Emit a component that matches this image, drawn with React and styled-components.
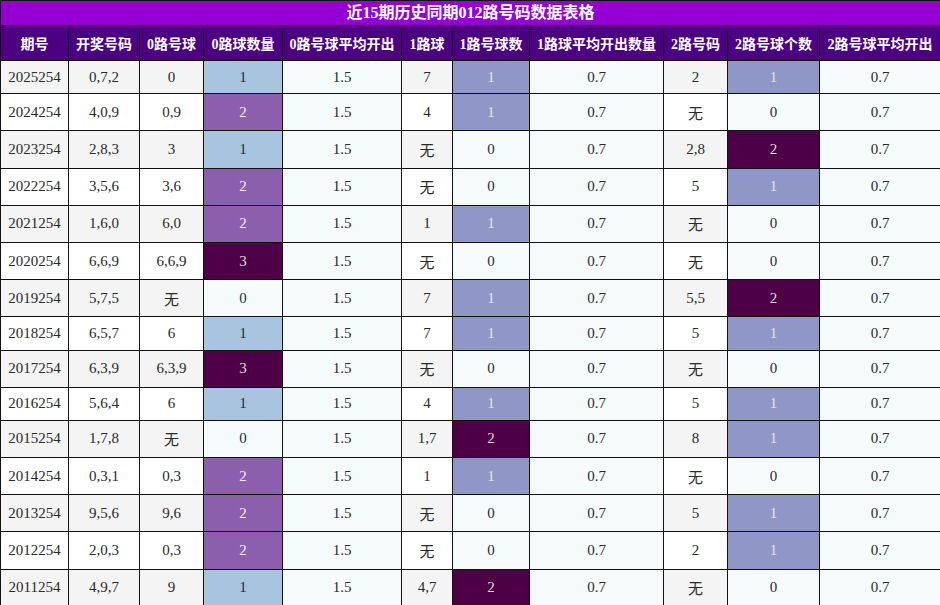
import React from 'react';
import styled, { createGlobalStyle } from 'styled-components';

const GlobalStyle = createGlobalStyle`
  body {
    margin: 0;
    background: #fff;
    font-family: "Liberation Serif", "Noto Sans CJK SC", serif;
  }
`;

const StyledTable = styled.table`
  width: 940px;
  border-collapse: collapse;
  table-layout: fixed;
  text-align: center;
  font-size: 15px;
  color: #2a2a2a;

  td,
  th {
    border: 1px solid #111;
  }
`;

const TitleCell = styled.th`
  height: 24px;
  padding: 0;
  line-height: 24px;
  background: #9400d3;
  color: #fff;
  font-size: 16px;
  font-weight: 700;
`;

const HeadCell = styled.th`
  padding: 7px 0;
  background: #4b0082;
  color: #fff;
  font-size: 14px;
  font-weight: 700;
  white-space: nowrap;
`;

const Cell = styled.td`
  padding: 7.6px 0;
  white-space: nowrap;
  background: ${({ $bg }) => $bg || '#fff'};
  color: ${({ $fg }) => $fg || '#2a2a2a'};
`;

const widths = [68, 71, 64, 79, 119, 51, 77, 134, 64, 92, 121];

const headers = [
  '期号',
  '开奖号码',
  '0路号球',
  '0路球数量',
  '0路号球平均开出',
  '1路球',
  '1路号球数',
  '1路球平均开出数量',
  '2路号码',
  '2路号球个数',
  '2路号球平均开出',
];

const rows = [
  ['2025254', '0,7,2', '0', 1, '7', 1, '2', 1],
  ['2024254', '4,0,9', '0,9', 2, '4', 1, '无', 0],
  ['2023254', '2,8,3', '3', 1, '无', 0, '2,8', 2],
  ['2022254', '3,5,6', '3,6', 2, '无', 0, '5', 1],
  ['2021254', '1,6,0', '6,0', 2, '1', 1, '无', 0],
  ['2020254', '6,6,9', '6,6,9', 3, '无', 0, '无', 0],
  ['2019254', '5,7,5', '无', 0, '7', 1, '5,5', 2],
  ['2018254', '6,5,7', '6', 1, '7', 1, '5', 1],
  ['2017254', '6,3,9', '6,3,9', 3, '无', 0, '无', 0],
  ['2016254', '5,6,4', '6', 1, '4', 1, '5', 1],
  ['2015254', '1,7,8', '无', 0, '1,7', 2, '8', 1],
  ['2014254', '0,3,1', '0,3', 2, '1', 1, '无', 0],
  ['2013254', '9,5,6', '9,6', 2, '无', 0, '5', 1],
  ['2012254', '2,0,3', '0,3', 2, '无', 0, '2', 1],
  ['2011254', '4,9,7', '9', 1, '4,7', 2, '无', 0],
];

const AVG_BG = '#f5fbfb';

// count colours: 0路 column uses its own scale, 1路 / 2路 share one
const zeroScale = {
  0: { bg: AVG_BG, fg: '#2a2a2a' },
  1: { bg: '#a9c4df', fg: '#2a2a2a' },
  2: { bg: '#8c5fac', fg: '#eee' },
  3: { bg: '#4d0046', fg: '#ddd' },
};

const otherScale = {
  0: { bg: AVG_BG, fg: '#2a2a2a' },
  1: { bg: '#8e97c6', fg: '#e4e4f0' },
  2: { bg: '#4d0046', fg: '#ddd' },
};

const CountCell = ({ value, scale }) => (
  <Cell $bg={scale[value].bg} $fg={scale[value].fg}>
    {value}
  </Cell>
);

const App = () => (
  <>
    <GlobalStyle />
    <StyledTable>
      <colgroup>
        {widths.map((w, i) => (
          <col key={i} style={{ width: w }} />
        ))}
      </colgroup>
      <thead>
        <tr>
          <TitleCell colSpan={11}>近15期历史同期012路号码数据表格</TitleCell>
        </tr>
        <tr>
          {headers.map((h) => (
            <HeadCell key={h}>{h}</HeadCell>
          ))}
        </tr>
      </thead>
      <tbody>
        {rows.map(([issue, draw, zero, zeroCount, one, oneCount, two, twoCount], i) => {
          const plain = i % 2 === 0 ? '#f4f4f4' : '#fff';
          return (
            <tr key={issue}>
              <Cell $bg={plain}>{issue}</Cell>
              <Cell $bg={plain}>{draw}</Cell>
              <Cell $bg={plain}>{zero}</Cell>
              <CountCell value={zeroCount} scale={zeroScale} />
              <Cell $bg={AVG_BG}>1.5</Cell>
              <Cell $bg={plain}>{one}</Cell>
              <CountCell value={oneCount} scale={otherScale} />
              <Cell $bg={AVG_BG}>0.7</Cell>
              <Cell $bg={plain}>{two}</Cell>
              <CountCell value={twoCount} scale={otherScale} />
              <Cell $bg={AVG_BG}>0.7</Cell>
            </tr>
          );
        })}
      </tbody>
    </StyledTable>
  </>
);

export default App;
